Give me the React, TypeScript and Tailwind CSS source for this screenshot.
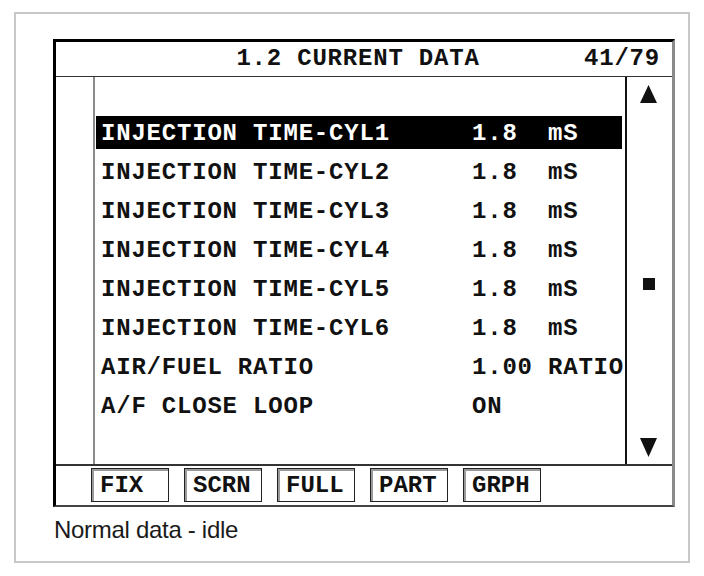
import React from "react";

type Row = { label: string; value: string; unit: string; active?: boolean };

const rows: Row[] = [
  { label: "INJECTION TIME-CYL1", value: "1.8", unit: "mS", active: true },
  { label: "INJECTION TIME-CYL2", value: "1.8", unit: "mS" },
  { label: "INJECTION TIME-CYL3", value: "1.8", unit: "mS" },
  { label: "INJECTION TIME-CYL4", value: "1.8", unit: "mS" },
  { label: "INJECTION TIME-CYL5", value: "1.8", unit: "mS" },
  { label: "INJECTION TIME-CYL6", value: "1.8", unit: "mS" },
  { label: "AIR/FUEL RATIO", value: "1.00", unit: "RATIO" },
  { label: "A/F CLOSE LOOP", value: "ON", unit: "" },
];

const buttons = ["FIX", "SCRN", "FULL", "PART", "GRPH"];

const mono = "font-['Liberation_Mono',monospace] font-bold text-[24px] leading-none tracking-[0.8px]";

export default function App() {
  return (
    <div className="h-[576px] w-[704px] bg-white pl-[14px] pt-[12px]">
      <div className="flex h-[551px] w-[676px] flex-col border-2 border-[#c8c8c8] pl-[37px] pt-[25px]">
        {/* scanner screen */}
        <div className="flex w-[622px] flex-col border-t-[3px] border-l-[3px] border-r-[3px] border-b-2 border-t-black border-l-black border-r-[#8a8a8a] border-b-[#444] text-[#111]">
          <div className={`grid h-[35px] grid-cols-[1fr_auto_1fr] items-center border-b border-[#333] pr-[12px] ${mono}`}>
            <span />
            <span>1.2 CURRENT DATA</span>
            <span className="text-right">41/79</span>
          </div>

          <div className="flex h-[389px] border-b-2 border-[#333]">
            <div className="w-[39px] border-r-2 border-[#8a8a8a]" />
            <div className="flex w-[532px] flex-col gap-[6px] border-r-2 border-[#111] pl-[1px] pr-[3px] pt-[39px]">
              {rows.map((r) => (
                <div
                  key={r.label}
                  className={`grid h-[33px] grid-cols-[371px_76px_1fr] items-center pl-[5px] pt-[2px] ${mono} ${
                    r.active ? "bg-black text-white" : ""
                  }`}
                >
                  <span className="whitespace-pre">{r.label}</span>
                  <span>{r.value}</span>
                  <span>{r.unit}</span>
                </div>
              ))}
            </div>
            <div className="flex flex-1 flex-col items-center pt-[8px]">
              <svg width="17" height="18" viewBox="0 0 17 18" className="ml-[-3px]">
                <polygon points="8.5,0 17,18 0,18" fill="#111" />
              </svg>
              <div className="ml-[-2px] mt-[175px] h-[12px] w-[12px] bg-[#111]" />
              <svg width="17" height="19" viewBox="0 0 17 19" className="ml-[-3px] mt-[148px]">
                <polygon points="0,0 17,0 8.5,19" fill="#111" />
              </svg>
            </div>
          </div>

          <div className="flex h-[39px] gap-[15px] pl-[35px] pt-[2px]">
            {buttons.map((b) => (
              <div
                key={b}
                className={`flex h-[34px] w-[78px] items-center border border-[#222] pl-[8px] pt-[2px] shadow-[inset_2px_2px_0_#9a9a9a] ${mono} tracking-[0px]`}
              >
                {b}
              </div>
            ))}
          </div>
        </div>

        <div className="ml-[1px] mt-[11px] font-['Liberation_Sans',Arial,sans-serif] text-[24px] leading-[23px] tracking-[-0.3px] text-[#1a1a1a]">
          Normal data - idle
        </div>
      </div>
    </div>
  );
}
